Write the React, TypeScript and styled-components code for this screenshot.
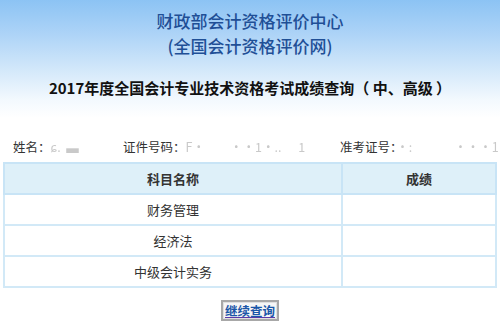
import React from "react";
import styled, { createGlobalStyle } from "styled-components";

const GlobalStyle = createGlobalStyle`
  html, body {
    margin: 0;
    padding: 0;
    background: #ffffff;
  }
  body {
    font-family: "Noto Sans CJK SC", "Noto Sans", "Liberation Sans", sans-serif;
    color: #222;
  }
`;

const Page = styled.div`
  width: 500px;
  height: 327px;
  overflow: hidden;
  background: linear-gradient(
    to bottom,
    #8cc3f4 0px,
    #aed4f7 35px,
    #d3e8fa 70px,
    #f3f9fe 100px,
    #ffffff 118px
  );
`;

const Header = styled.div`
  display: flex;
  flex-direction: column;
  align-items: center;
  padding-top: 8px;
`;

const SiteTitle = styled.div`
  font-size: 17px;
  line-height: 25px;
  font-weight: 500;
  color: #1f4f96;
`;

const QueryTitle = styled.div`
  margin-top: 19px;
  font-size: 15px;
  line-height: 22px;
  font-weight: 700;
  color: #111;
`;

const InfoRow = styled.div`
  display: flex;
  margin-top: 39px;
  padding-left: 13px;
  font-size: 12.5px;
  line-height: 18px;
  color: #333;
`;

const InfoItem = styled.div<{ $w?: number }>`
  width: ${(p) => (p.$w ? `${p.$w}px` : "auto")};
  white-space: nowrap;
  overflow: hidden;
`;

const Hidden = styled.span`
  white-space: pre;
  color: #c9c9c9;
  filter: blur(0.6px);
`;

const Grid = styled.table`
  margin: 6px 3px 0 3px;
  width: 494px;
  border-collapse: collapse;
  border: 2px solid #c8e4f6;
  font-size: 13px;
  color: #333;
`;

const HeadCell = styled.th<{ $w?: number }>`
  width: ${(p) => (p.$w ? `${p.$w}px` : "auto")};
  height: 29px;
  padding: 0;
  background: #def0f9;
  border: 2px solid #c8e4f6;
  font-weight: 700;
  text-align: center;
`;

const Cell = styled.td`
  height: 29px;
  padding: 0;
  border: 2px solid #d2e9f7;
  text-align: center;
  background: #ffffff;
`;

const Footer = styled.div`
  display: flex;
  justify-content: center;
  margin-top: 12px;
`;

const Button = styled.button`
  height: 21px;
  padding: 0 2px;
  border: 2px solid #a8a8a8;
  outline: 1px solid #e0e0e0;
  outline-offset: -3px;
  background: #f6f6f6;
  font-family: "Noto Sans CJK SC", "Noto Sans", sans-serif;
  font-size: 12.5px;
  line-height: 15px;
  font-weight: 700;
  color: #1a56a8;
  text-decoration: underline;
  text-decoration-color: #5b3aa8;
  cursor: pointer;
`;

const subjects = ["财务管理", "经济法", "中级会计实务"];

export default function App() {
  return (
    <Page>
      <GlobalStyle />
      <Header>
        <SiteTitle>财政部会计资格评价中心</SiteTitle>
        <SiteTitle>(全国会计资格评价网)</SiteTitle>
        <QueryTitle>2017年度全国会计专业技术资格考试成绩查询（ 中、高级 ）</QueryTitle>
      </Header>
      <InfoRow>
        <InfoItem $w={110}>
          姓名：<Hidden>ɕ.  ▃</Hidden>
        </InfoItem>
        <InfoItem $w={217}>
          证件号码：<Hidden>F·         ··1·..      1</Hidden>
        </InfoItem>
        <InfoItem>
          准考证号：<Hidden>·:               ···1</Hidden>
        </InfoItem>
      </InfoRow>
      <Grid>
        <thead>
          <tr>
            <HeadCell $w={336}>科目名称</HeadCell>
            <HeadCell>成绩</HeadCell>
          </tr>
        </thead>
        <tbody>
          {subjects.map((s) => (
            <tr key={s}>
              <Cell>{s}</Cell>
              <Cell></Cell>
            </tr>
          ))}
        </tbody>
      </Grid>
      <Footer>
        <Button>继续查询</Button>
      </Footer>
    </Page>
  );
}
